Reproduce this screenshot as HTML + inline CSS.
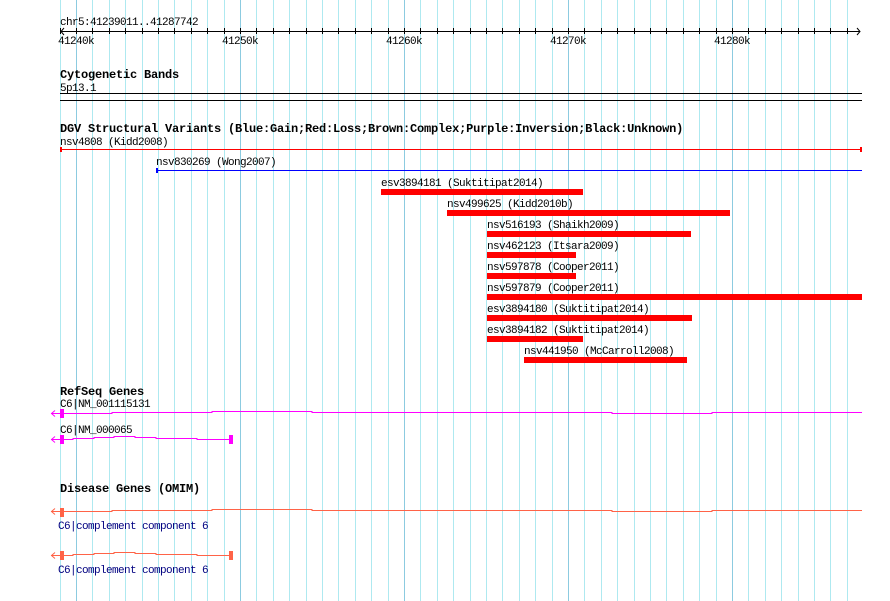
<!DOCTYPE html>
<html><head><meta charset="utf-8"><style>
html,body{margin:0;padding:0;background:#fff;}
svg{display:block;}
text{font-family:"Liberation Mono","DejaVu Sans Mono",monospace;font-size:11px;letter-spacing:-0.6px;fill:#000;}
.b{font-weight:bold;font-size:12px;letter-spacing:-0.2px;}
.n{fill:#000080;}
</style></head><body>
<svg width="890" height="601" viewBox="0 0 890 601" xmlns="http://www.w3.org/2000/svg">
<path stroke="#aee9f0" stroke-width="1" fill="none" d="M60.5 0V601M92.5 0V601M109.5 0V601M125.5 0V601M142.5 0V601M158.5 0V601M174.5 0V601M191.5 0V601M207.5 0V601M224.5 0V601M256.5 0V601M273.5 0V601M289.5 0V601M306.5 0V601M322.5 0V601M338.5 0V601M355.5 0V601M371.5 0V601M388.5 0V601M420.5 0V601M437.5 0V601M453.5 0V601M470.5 0V601M486.5 0V601M502.5 0V601M519.5 0V601M535.5 0V601M552.5 0V601M584.5 0V601M601.5 0V601M617.5 0V601M634.5 0V601M650.5 0V601M666.5 0V601M683.5 0V601M699.5 0V601M716.5 0V601M748.5 0V601M765.5 0V601M781.5 0V601M798.5 0V601M814.5 0V601M830.5 0V601M847.5 0V601"/>
<path stroke="#8ccbe0" stroke-width="1" fill="none" d="M76.5 0V601M240.5 0V601M404.5 0V601M568.5 0V601M732.5 0V601"/>
<path stroke="#000" stroke-width="1" fill="none" d="M60.5 28V34M76.5 28V34M92.5 28V34M109.5 28V34M125.5 28V34M142.5 28V34M158.5 28V34M174.5 28V34M191.5 28V34M207.5 28V34M224.5 28V34M240.5 28V34M256.5 28V34M273.5 28V34M289.5 28V34M306.5 28V34M322.5 28V34M338.5 28V34M355.5 28V34M371.5 28V34M388.5 28V34M404.5 28V34M420.5 28V34M437.5 28V34M453.5 28V34M470.5 28V34M486.5 28V34M502.5 28V34M519.5 28V34M535.5 28V34M552.5 28V34M568.5 28V34M584.5 28V34M601.5 28V34M617.5 28V34M634.5 28V34M650.5 28V34M666.5 28V34M683.5 28V34M699.5 28V34M716.5 28V34M732.5 28V34M748.5 28V34M765.5 28V34M781.5 28V34M798.5 28V34M814.5 28V34M830.5 28V34M847.5 28V34"/>
<text x="60" y="25">chr5:41239011..41287742</text>
<line x1="61" y1="31.5" x2="860" y2="31.5" stroke="#000"/>
<polyline points="64,28 61,31.5 64,35" fill="none" stroke="#000"/>
<polyline points="857,28 860,31.5 857,35" fill="none" stroke="#000"/>
<text x="58" y="44">41240k</text>
<text x="222" y="44">41250k</text>
<text x="386" y="44">41260k</text>
<text x="550" y="44">41270k</text>
<text x="714" y="44">41280k</text>

<text class="b" x="60" y="78">Cytogenetic Bands</text>
<text x="60" y="91">5p13.1</text>
<rect x="60" y="93" width="802" height="1" fill="#000"/>
<rect x="60" y="100" width="802" height="1" fill="#000"/>

<text class="b" x="60" y="132">DGV Structural Variants (Blue:Gain;Red:Loss;Brown:Complex;Purple:Inversion;Black:Unknown)</text>
<text x="60" y="145">nsv4808 (Kidd2008)</text>
<rect x="60" y="149" width="802" height="1" fill="#f00"/>
<rect x="60" y="147" width="2" height="5" fill="#f00"/>
<rect x="860" y="147" width="2" height="5" fill="#f00"/>
<text x="156" y="165">nsv830269 (Wong2007)</text>
<rect x="156" y="170" width="706" height="1" fill="#00f"/>
<rect x="156" y="168" width="2" height="5" fill="#00f"/>

<text x="381" y="186">esv3894181 (Suktitipat2014)</text>
<text x="447" y="207">nsv499625 (Kidd2010b)</text>
<text x="487" y="228">nsv516193 (Shaikh2009)</text>
<text x="487" y="249">nsv462123 (Itsara2009)</text>
<text x="487" y="270">nsv597878 (Cooper2011)</text>
<text x="487" y="291">nsv597879 (Cooper2011)</text>
<text x="487" y="312">esv3894180 (Suktitipat2014)</text>
<text x="487" y="333">esv3894182 (Suktitipat2014)</text>
<text x="524" y="354">nsv441950 (McCarroll2008)</text>
<g fill="#f00">
<rect x="381" y="189" width="202" height="6"/>
<rect x="447" y="210" width="283" height="6"/>
<rect x="487" y="231" width="204" height="6"/>
<rect x="487" y="252" width="89" height="6"/>
<rect x="487" y="273" width="89" height="6"/>
<rect x="487" y="294" width="375" height="6"/>
<rect x="487" y="315" width="205" height="6"/>
<rect x="487" y="336" width="96" height="6"/>
<rect x="524" y="357" width="163" height="6"/>
</g>

<text class="b" x="60" y="395">RefSeq Genes</text>
<text x="60" y="407">C6|NM_001115131</text>
<polyline points="51,413.5 112,413.5 112,412.5 212,412.5 212,411.5 312,411.5 312,412.5 612,412.5 612,413.5 712,413.5 712,412.5 862,412.5" fill="none" stroke="#f0f"/>
<polyline points="55,410.5 51.5,413.5 55,416.5" fill="none" stroke="#f0f"/>
<rect x="60" y="409" width="4" height="9" fill="#f0f"/>
<text x="60" y="433">C6|NM_000065</text>
<polyline points="51,439.5 73,439.5 73,438.5 94,438.5 94,437.5 114,437.5 114,436.5 135,436.5 135,437.5 156,437.5 156,438.5 197,438.5 197,439.5 230,439.5" fill="none" stroke="#f0f"/>
<polyline points="55,436.5 51.5,439.5 55,442.5" fill="none" stroke="#f0f"/>
<rect x="60" y="435" width="4" height="9" fill="#f0f"/>
<rect x="229" y="435" width="4" height="9" fill="#f0f"/>

<text class="b" x="60" y="492">Disease Genes (OMIM)</text>
<polyline points="51,511.5 112,511.5 112,510.5 212,510.5 212,509.5 312,509.5 312,510.5 612,510.5 612,511.5 712,511.5 712,510.5 862,510.5" fill="none" stroke="#ff6347"/>
<polyline points="55,508.5 51.5,511.5 55,514.5" fill="none" stroke="#ff6347"/>
<rect x="60" y="508" width="4" height="9" fill="#ff6347"/>
<text class="n" x="58" y="529">C6|complement component 6</text>
<polyline points="51,555.5 73,555.5 73,554.5 94,554.5 94,553.5 114,553.5 114,552.5 135,552.5 135,553.5 156,553.5 156,554.5 197,554.5 197,555.5 230,555.5" fill="none" stroke="#ff6347"/>
<polyline points="55,552.5 51.5,555.5 55,558.5" fill="none" stroke="#ff6347"/>
<rect x="60" y="551" width="4" height="9" fill="#ff6347"/>
<rect x="229" y="551" width="4" height="9" fill="#ff6347"/>
<text class="n" x="58" y="573">C6|complement component 6</text>
</svg>
</body></html>
